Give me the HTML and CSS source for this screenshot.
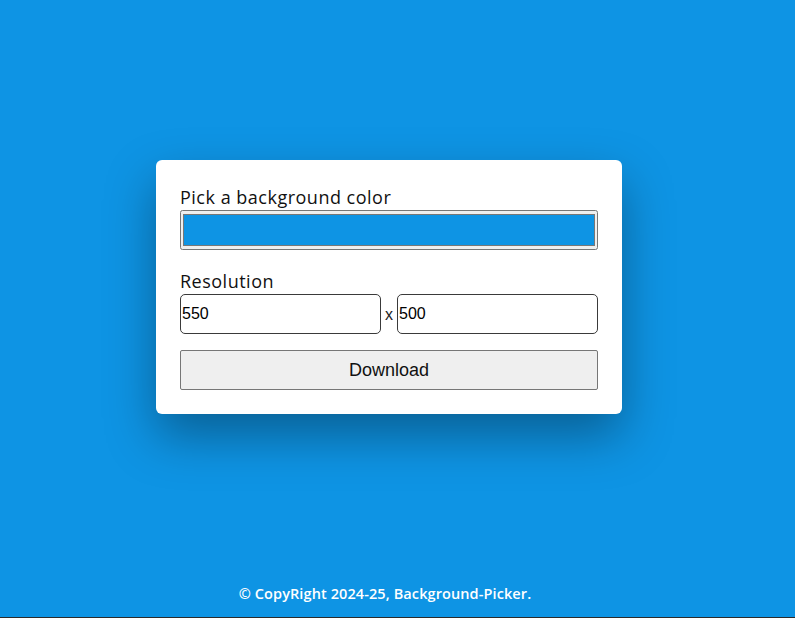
FILE: index.html
```html
<!DOCTYPE html>
<html lang="en">
<head>
<meta charset="utf-8">
<title>Background Picker</title>
<link rel="stylesheet" href="styles.css">
</head>
<body>
<main class="main">
  <section class="card">
    <div class="field">
      <label class="label" for="color">Pick a background color</label>
      <input class="color-input" id="color" type="color" value="#0e94e4">
    </div>
    <div class="field">
      <label class="label" for="w">Resolution</label>
      <div class="res-row">
        <input class="num-input" id="w" type="text" value="550">
        <span class="times">x</span>
        <input class="num-input" id="h" type="text" value="500">
      </div>
    </div>
    <button class="download" type="button">Download</button>
  </section>
</main>
<footer class="footer">© CopyRight 2024-25, Background-Picker.</footer>
</body>
</html>
```

FILE: styles.css
```css
* { box-sizing: border-box; }
html, body { height: 100%; }
body {
  margin: 0;
  background: #0e94e4;
  font-family: "Open Sans", "Liberation Sans", sans-serif;
  display: flex;
  flex-direction: column;
  overflow: hidden;
}
.main {
  flex: 1;
  display: flex;
  align-items: center;
  justify-content: center;
  padding-right: 17px;
}
.card {
  width: 466px;
  background: #fff;
  border-radius: 6px;
  padding: 25px 24px 24px;
  box-shadow: 0 22px 50px rgba(0, 0, 0, 0.35);
  display: flex;
  flex-direction: column;
}
.field { margin-bottom: 19px; display: flex; flex-direction: column; }
.field + .field { margin-bottom: 16px; }
.label {
  font-size: 18px;
  line-height: 25px;
  color: #111;
  letter-spacing: 0.5px;
}
.color-input {
  width: 100%;
  height: 40px;
  margin: 0;
  padding: 0;
}
.color-input::-webkit-color-swatch-wrapper {
  padding: 3px 2px;
}
.res-row {
  display: flex;
  align-items: center;
  gap: 4px;
}
.num-input {
  flex: 1;
  min-width: 0;
  height: 40px;
  margin: 0;
  padding: 0 1px;
  border: 1px solid #3a3a3a;
  border-radius: 5px;
  font-family: "Liberation Sans", Arial, sans-serif;
  font-size: 16px;
  color: #000;
}
.times {
  font-family: "Liberation Sans", Arial, sans-serif;
  font-size: 16px;
  color: #222;
  padding-top: 2px;
}
.download {
  height: 40px;
  width: 100%;
  margin: 0;
  background: #efefef;
  border: 1px solid #767676;
  border-radius: 2px;
  font-family: "Liberation Sans", Arial, sans-serif;
  font-size: 18px;
  color: #111;
}
.footer {
  height: 44px;
  padding: 0 25px 3px 0;
  text-align: center;
  color: #fff;
  font-size: 14.5px;
  font-weight: 600;
  letter-spacing: 0.1px;
  line-height: 40px;
  border-bottom: 1px solid #2a2a2a;
}
```
